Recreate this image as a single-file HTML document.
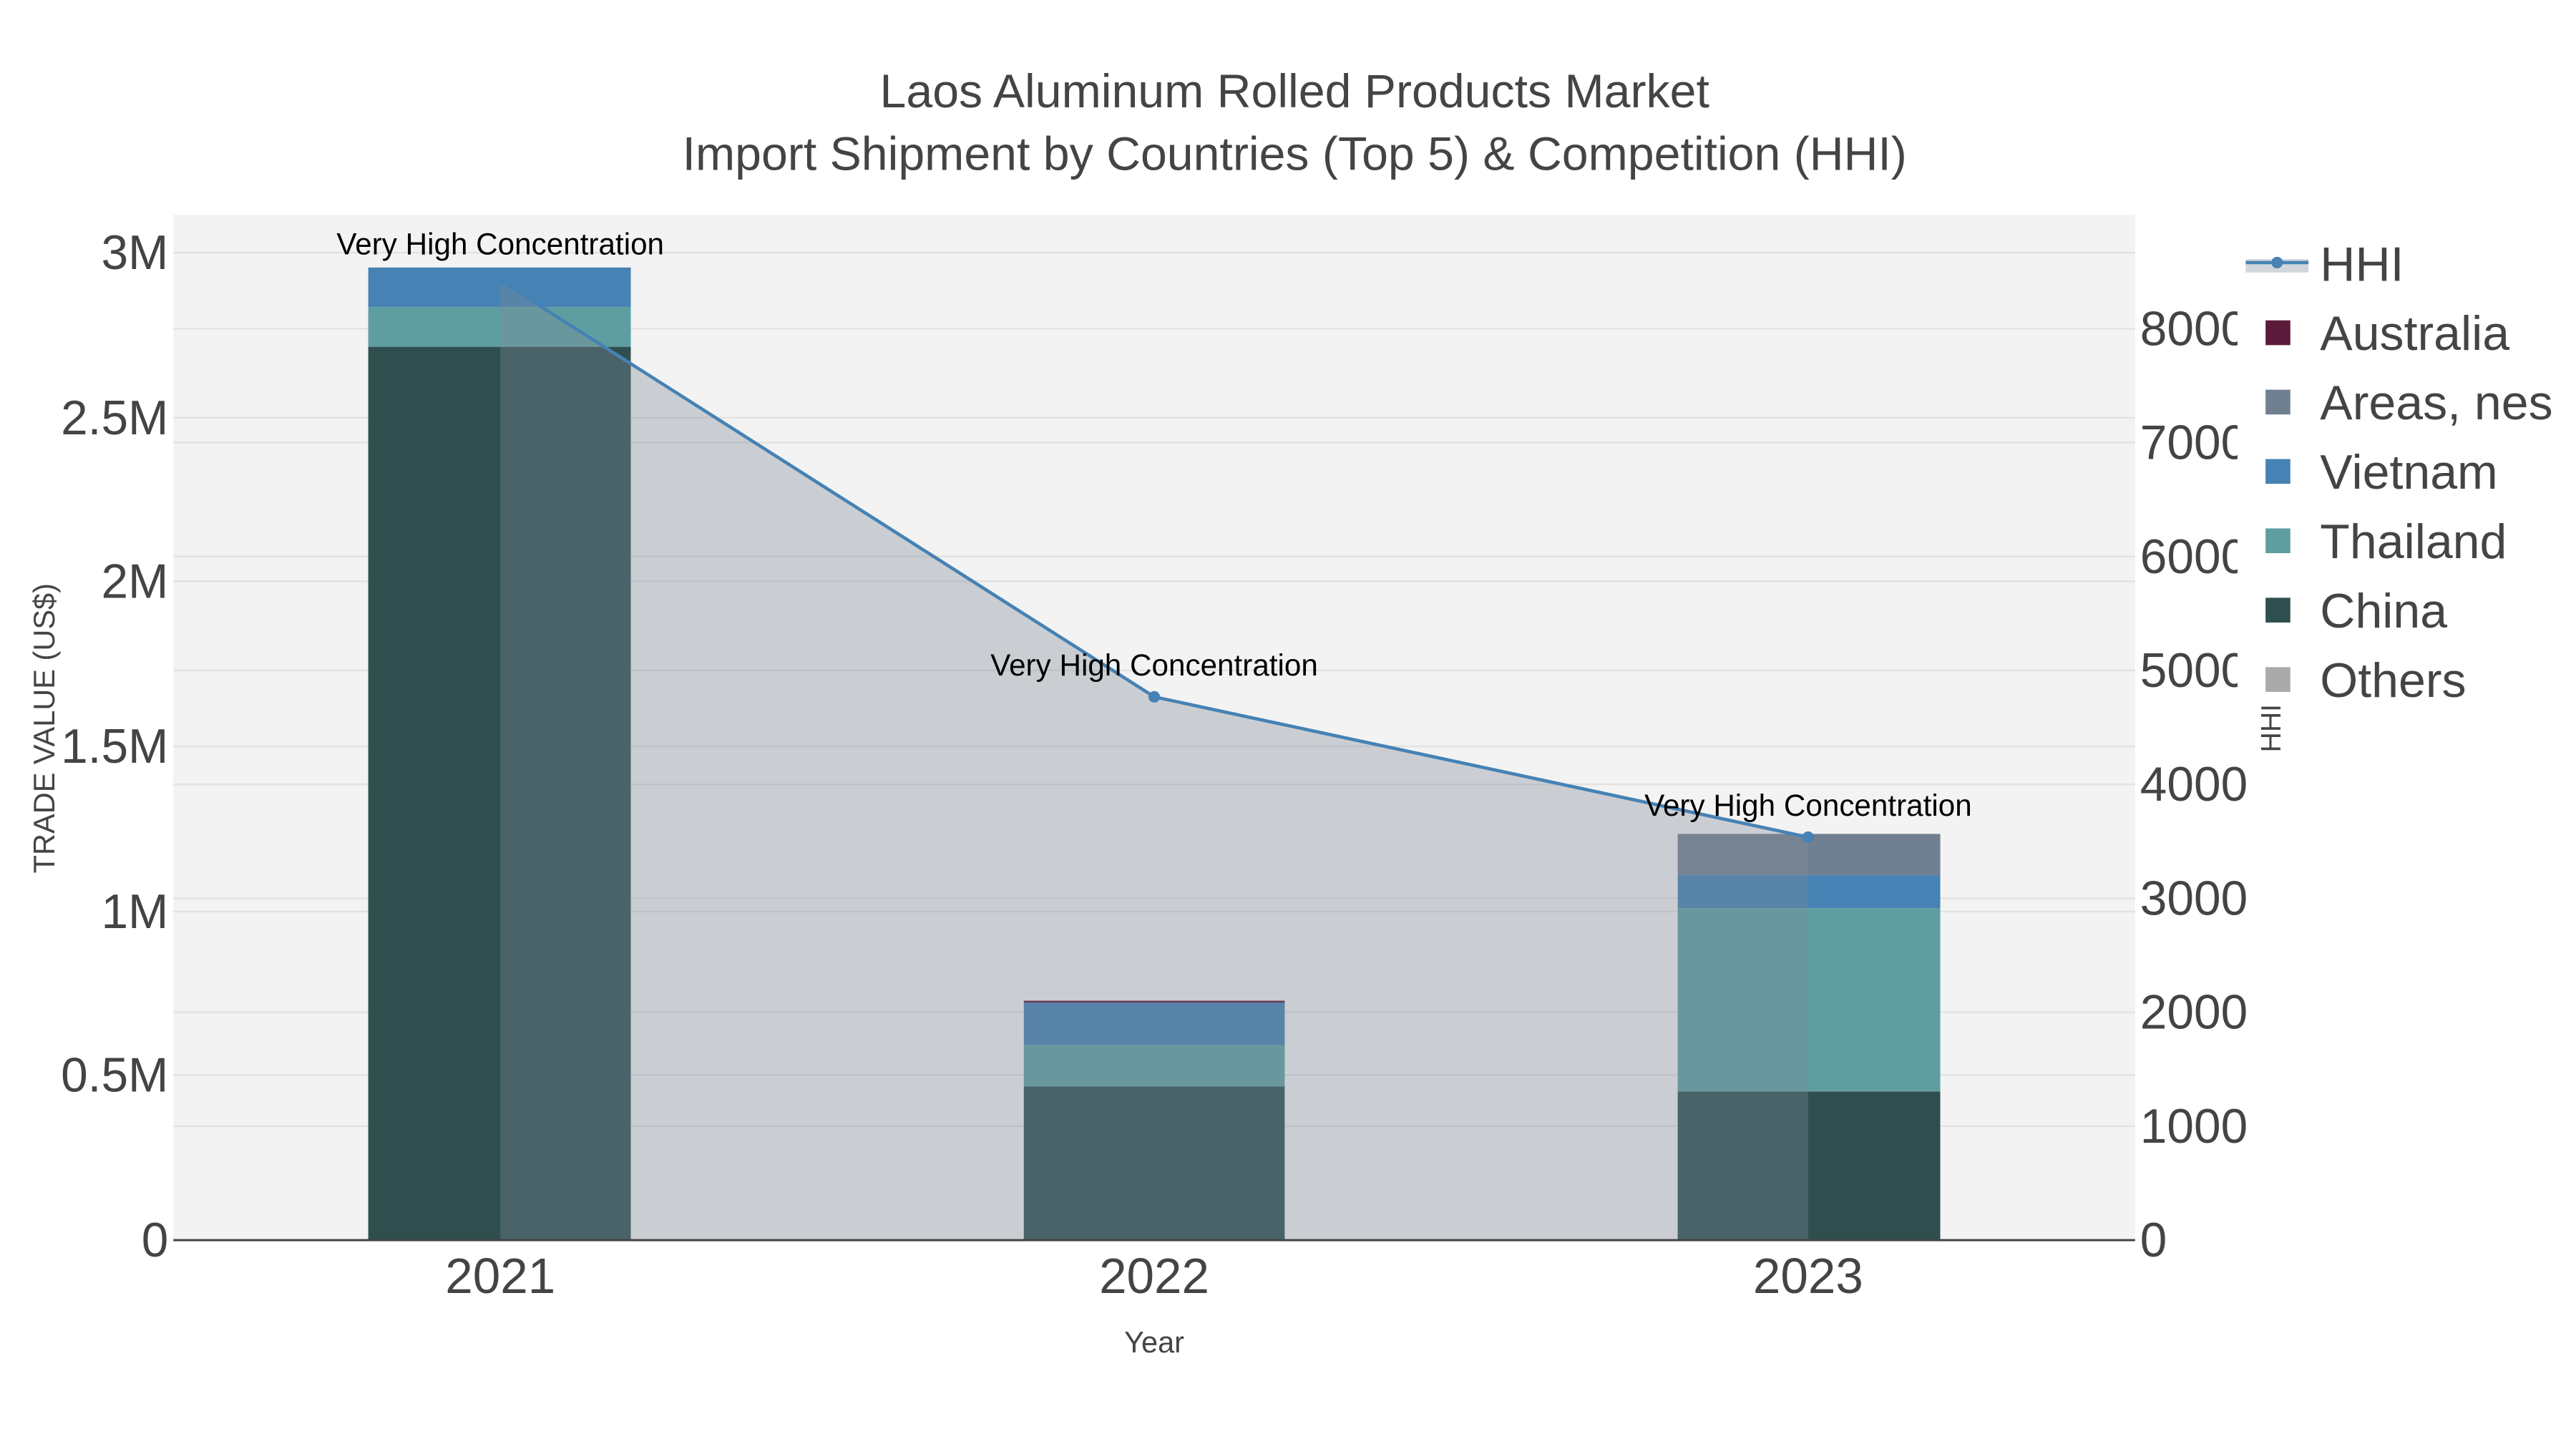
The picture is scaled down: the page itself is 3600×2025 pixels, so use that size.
<!DOCTYPE html>
<html><head><meta charset="utf-8"><style>
html,body{margin:0;padding:0;background:#fff;}
svg{display:block;}
text{font-family:"Liberation Sans",sans-serif;}
</style></head><body>
<svg width="3600" height="2025" viewBox="0 0 1560 877.5" xmlns="http://www.w3.org/2000/svg">
<rect width="1560" height="877.5" fill="#fff"/>
<rect x="105" y="130" width="1188" height="621" fill="#f3f3f3"/>
<g stroke="#e2e2e2" stroke-width="1">
<line x1="105" x2="1293" y1="153" y2="153"/><line x1="105" x2="1293" y1="253" y2="253"/>
<line x1="105" x2="1293" y1="352" y2="352"/><line x1="105" x2="1293" y1="452" y2="452"/>
<line x1="105" x2="1293" y1="552" y2="552"/><line x1="105" x2="1293" y1="651" y2="651"/>
<line x1="105" x2="1293" y1="199" y2="199"/><line x1="105" x2="1293" y1="268" y2="268"/>
<line x1="105" x2="1293" y1="337" y2="337"/><line x1="105" x2="1293" y1="406" y2="406"/>
<line x1="105" x2="1293" y1="475" y2="475"/><line x1="105" x2="1293" y1="544" y2="544"/>
<line x1="105" x2="1293" y1="613" y2="613"/><line x1="105" x2="1293" y1="682" y2="682"/>
</g>
<rect x="223" y="210" width="159" height="541" fill="#2f4f4f"/>
<rect x="223" y="186" width="159" height="24" fill="#5f9ea0"/>
<rect x="223" y="162" width="159" height="24" fill="#4682b4"/>
<rect x="620" y="658" width="158" height="93" fill="#2f4f4f"/>
<rect x="620" y="633" width="158" height="25" fill="#5f9ea0"/>
<rect x="620" y="607" width="158" height="26" fill="#4682b4"/>
<rect x="620" y="606" width="158" height="1.2" fill="#5c1a3a"/>
<rect x="1016" y="661" width="159" height="90" fill="#2f4f4f"/>
<rect x="1016" y="550" width="159" height="111" fill="#5f9ea0"/>
<rect x="1016" y="530" width="159" height="20" fill="#4682b4"/>
<rect x="1016" y="505" width="159" height="25" fill="#708090"/>
<polygon points="303,170 699,422 1095,507 1095,751 303,751" fill="rgba(125,137,152,0.35)"/>
<polyline points="303,170 699,422 1095,507" fill="none" stroke="#4682b4" stroke-width="2"/>
<circle cx="303" cy="170" r="3.5" fill="#4682b4"/><circle cx="699" cy="422" r="3.5" fill="#4682b4"/><circle cx="1095" cy="507" r="3.5" fill="#4682b4"/>
<line x1="105" x2="1293" y1="751" y2="751" stroke="#444" stroke-width="1.3"/>
<g font-size="18.3" text-anchor="middle" fill="#000">
<text x="303" y="154">Very High Concentration</text>
<text x="699" y="409">Very High Concentration</text>
<text x="1095" y="494">Very High Concentration</text>
</g>
<g font-size="28.7" text-anchor="middle" fill="#444">
<text x="784" y="65">Laos Aluminum Rolled Products Market</text>
<text x="784" y="103">Import Shipment by Countries (Top 5) &amp; Competition (HHI)</text>
</g>
<g font-size="29.3" text-anchor="end" fill="#444">
<text x="102" y="163">3M</text><text x="102" y="263">2.5M</text><text x="102" y="362">2M</text>
<text x="102" y="462">1.5M</text><text x="102" y="562">1M</text><text x="102" y="661">0.5M</text>
<text x="102" y="761">0</text>
</g>
<text x="33" y="441" font-size="18" fill="#444" text-anchor="middle" transform="rotate(-90 33 441)">TRADE VALUE (US$)</text>
<g font-size="30" text-anchor="middle" fill="#444">
<text x="303" y="783">2021</text><text x="699" y="783">2022</text><text x="1095" y="783">2023</text>
</g>
<text x="699" y="819" font-size="18" fill="#444" text-anchor="middle">Year</text>
<g font-size="29.3" fill="#444">
<text x="1296" y="209">8000</text><text x="1296" y="278">7000</text><text x="1296" y="347">6000</text>
<text x="1296" y="416">5000</text><text x="1296" y="485">4000</text><text x="1296" y="554">3000</text>
<text x="1296" y="623">2000</text><text x="1296" y="692">1000</text><text x="1296" y="761">0</text>
</g>
<rect x="1355" y="140" width="205" height="290" fill="#fff"/>
<text x="1381" y="441" font-size="17" fill="#444" text-anchor="middle" transform="rotate(-90 1381 441)">HHI</text>
<rect x="1360" y="157" width="38" height="8" fill="rgba(125,137,152,0.35)"/>
<line x1="1360" x2="1398" y1="159" y2="159" stroke="#4682b4" stroke-width="2"/>
<circle cx="1379" cy="159" r="3.5" fill="#4682b4"/>
<rect x="1372" y="194" width="15" height="15" fill="#5c1a3a"/>
<rect x="1372" y="236" width="15" height="15" fill="#708090"/>
<rect x="1372" y="278" width="15" height="15" fill="#4682b4"/>
<rect x="1372" y="320" width="15" height="15" fill="#5f9ea0"/>
<rect x="1372" y="362" width="15" height="15" fill="#2f4f4f"/>
<rect x="1372" y="404" width="15" height="15" fill="#aaaaaa"/>
<g font-size="29.5" fill="#444">
<text x="1405" y="170">HHI</text><text x="1405" y="212">Australia</text><text x="1405" y="254">Areas, nes</text>
<text x="1405" y="296">Vietnam</text><text x="1405" y="338">Thailand</text><text x="1405" y="380">China</text>
<text x="1405" y="422">Others</text>
</g>
</svg>
</body></html>
